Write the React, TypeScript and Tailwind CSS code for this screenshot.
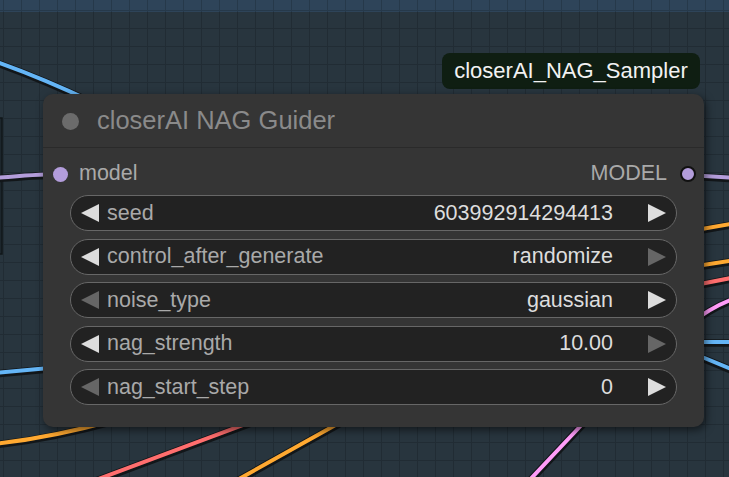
import React from 'react';

type Widget = { label: string; value: string; left: boolean; right: boolean };

const WIDGETS: Widget[] = [
  { label: 'seed', value: '603992914294413', left: true, right: true },
  { label: 'control_after_generate', value: 'randomize', left: true, right: false },
  { label: 'noise_type', value: 'gaussian', left: false, right: true },
  { label: 'nag_strength', value: '10.00', left: true, right: false },
  { label: 'nag_start_step', value: '0', left: false, right: true },
];

// links drawn on the canvas behind the node
const WIRES: { d: string; color: string }[] = [
  { d: 'M -6 61 Q 40 77 95 103', color: '#64b5f6' },
  { d: 'M -6 178 C 20 176 40 174 61 174', color: '#b39ddb' },
  { d: 'M -6 373 L 60 367', color: '#64b5f6' },
  { d: 'M -6 444 Q 50 438 115 420', color: '#ffa931' },
  { d: 'M 85 484 L 262 418', color: '#ff6e6e' },
  { d: 'M 230 484 L 348 418', color: '#ffa931' },
  { d: 'M 524 486 L 588 418', color: '#ff9cf9' },
  { d: 'M 688 175 L 736 178', color: '#b39ddb' },
  { d: 'M 690 231 L 736 223', color: '#ffa931' },
  { d: 'M 690 267 L 736 260', color: '#ffa931' },
  { d: 'M 690 286 L 736 277', color: '#ff6e6e' },
  { d: 'M 690 324 Q 712 306 736 298', color: '#ff9cf9' },
  { d: 'M 690 342 L 736 342', color: '#64b5f6' },
  { d: 'M 690 352 L 736 371', color: '#64b5f6' },
];

const Arrow = ({ dir, on }: { dir: 'left' | 'right'; on: boolean }) => (
  <svg width="18" height="18" viewBox="0 0 18 18" className="shrink-0">
    <polygon
      points={dir === 'left' ? '0,9 18,0 18,18' : '0,0 18,9 0,18'}
      fill={on ? '#dddddd' : '#666666'}
    />
  </svg>
);

const Canvas: React.FC = () => (
  <svg className="absolute inset-0" width="729" height="477">
    <defs>
      <pattern id="grid" x="3" y="10" width="18" height="18" patternUnits="userSpaceOnUse">
        <path d="M 0 0 L 18 0 M 0 0 L 0 18" stroke="rgba(0,0,0,0.17)" strokeWidth="2" fill="none" />
      </pattern>
    </defs>
    <rect width="729" height="477" fill="url(#grid)" />
    <rect x="-10" y="118" width="12" height="136" fill="#1c262c" stroke="#11171a" strokeWidth="1.5" />
    {WIRES.map((w, i) => (
      <g key={i} fill="none" strokeLinecap="round">
        <path d={w.d} stroke="#121619" strokeWidth="7.5" transform="translate(0 1)" />
        <path d={w.d} stroke={w.color} strokeWidth="4" />
      </g>
    ))}
  </svg>
);

export default function App() {
  return (
    <div className="relative w-[729px] h-[477px] overflow-hidden bg-[#28353e] font-['Liberation_Sans',Arial,sans-serif]">
      <div className="h-[12px] bg-[#2e4459]" />
      <Canvas />

      {/* group title badge */}
      <div className="absolute left-[442px] top-[53px] w-[258px] h-[36px] rounded-[8px] bg-[#0f1e12] flex items-center justify-center text-[22px] text-[#f2f2f2] leading-none">
        closerAI_NAG_Sampler
      </div>

      {/* node */}
      <div className="absolute left-[43px] top-[94px] w-[661px] rounded-[10px] bg-[#353535] shadow-[2px_3px_8px_rgba(0,0,0,0.55)]">
        <div className="h-[54px] pt-[1px] flex items-center border-b border-[#2a2a2a]">
          <div className="ml-[19px] w-[17px] h-[17px] rounded-full bg-[#6b6b6b]" />
          <span className="ml-[18px] text-[25.5px] leading-none text-[#8a8a8a]">closerAI NAG Guider</span>
        </div>

        <div className="h-[47px] pt-[5px] flex items-center text-[21.5px] leading-none text-[#a9a9a9]">
          <div className="ml-[10px] w-[15px] h-[15px] rounded-full bg-[#b39ddb]" />
          <span className="ml-[11px]">model</span>
          <span className="ml-auto">MODEL</span>
          <div className="ml-[13px] mr-[8px] w-[16px] h-[16px] rounded-full bg-[#b39ddb] border-2 border-[#111111]" />
        </div>

        <div className="flex flex-col gap-[7.5px] px-[27px] pb-[22px]">
          {WIDGETS.map((w) => (
            <div
              key={w.label}
              className="h-[36px] rounded-full border-[1.5px] border-[#676767] bg-[#222222] flex items-center px-[10px] text-[21.5px] leading-none"
            >
              <Arrow dir="left" on={w.left} />
              <span className="ml-[8px] pt-[1px] text-[#a9a9a9]">{w.label}</span>
              <span className="ml-auto pt-[1px] text-[#dddddd]">{w.value}</span>
              <span className="ml-[35px]">
                <Arrow dir="right" on={w.right} />
              </span>
            </div>
          ))}
        </div>
      </div>
    </div>
  );
}
